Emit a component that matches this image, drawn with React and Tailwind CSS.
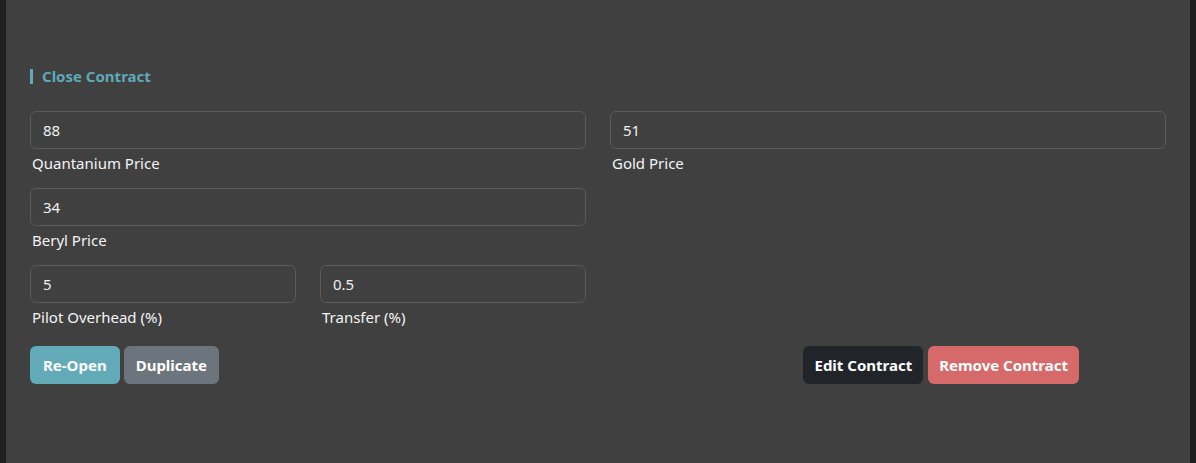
import { useState } from "react";

function Field({ label, value, className = "" }) {
  const [v, setV] = useState(value);
  return (
    <div className={`flex flex-col ${className}`}>
      <input
        type="text"
        value={v}
        onChange={(e) => setV(e.target.value)}
        className="h-[38px] w-full rounded-md border border-[#5a5a5a] bg-[#404040] px-3 text-[15px] text-[#f0f0f0] outline-none"
      />
      <label className="mt-[4px] pl-[2px] text-[15px] leading-[21px] text-[#f4f4f4]">{label}</label>
    </div>
  );
}

export default function App() {
  return (
    <div
      className="flex h-[463px] w-[1196px] bg-[#1f1f1f]"
      style={{ fontFamily: '"Noto Sans", "Open Sans", sans-serif' }}
    >
      <div className="ml-[6px] w-[1184px] bg-[#404040] pl-[24px] pr-[24px] pt-[66px]">
        {/* title */}
        <div className="flex items-center">
          <span className="h-[15px] w-[3px] bg-[#5fa9b9]" />
          <h2 className="ml-[9px] text-[15px] font-bold leading-[20px] text-[#5fa9b9]">Close Contract</h2>
        </div>

        <div className="mt-[25px] grid grid-cols-2 gap-x-[24px]">
          <Field label="Quantanium Price" value="88" />
          <Field label="Gold Price" value="51" />
        </div>

        <div className="mt-[14px] grid grid-cols-2 gap-x-[24px]">
          <Field label="Beryl Price" value="34" />
        </div>

        <div className="mt-[14px] grid grid-cols-4 gap-x-[24px]">
          <Field label="Pilot Overhead (%)" value="5" />
          <Field label="Transfer (%)" value="0.5" />
        </div>

        <div className="mt-[18px] flex items-center">
          <div className="flex gap-[4px]">
            <button className="h-[38px] rounded-md bg-[#63aab8] px-[13px] text-[15px] font-bold text-white">Re-Open</button>
            <button className="h-[38px] rounded-md bg-[#6c757d] px-[12px] text-[15px] font-bold text-white">Duplicate</button>
          </div>
          <div className="ml-auto mr-[87px] flex gap-[5px]">
            <button className="h-[38px] rounded-md bg-[#212529] px-[11px] text-[15px] font-bold text-white">Edit Contract</button>
            <button className="h-[38px] rounded-md bg-[#d66a6a] px-[11px] text-[15px] font-bold text-white">Remove Contract</button>
          </div>
        </div>
      </div>
    </div>
  );
}
